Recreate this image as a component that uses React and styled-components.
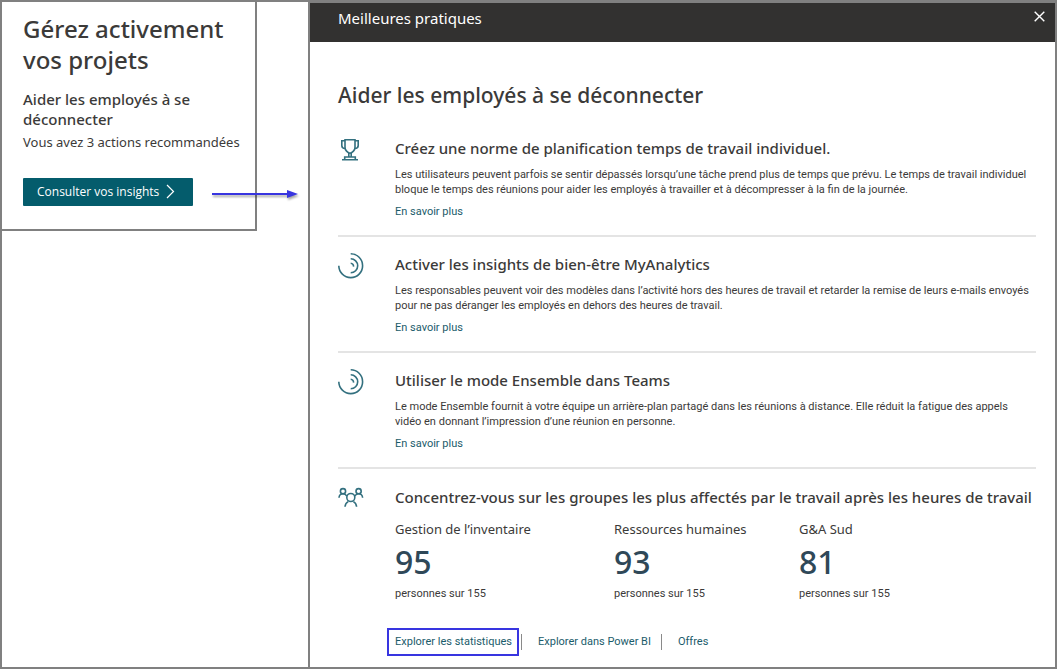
import styled, { createGlobalStyle } from "styled-components";

const practices = [
  {
    icon: "trophy",
    title: "Créez une norme de planification temps de travail individuel.",
    lines: [
      "Les utilisateurs peuvent parfois se sentir dépassés lorsqu’une tâche prend plus de temps que prévu. Le temps de travail individuel",
      "bloque le temps des réunions pour aider les employés à travailler et à décompresser à la fin de la journée.",
    ],
  },
  {
    icon: "rings",
    title: "Activer les insights de bien-être MyAnalytics",
    lines: [
      "Les responsables peuvent voir des modèles dans l’activité hors des heures de travail et retarder la remise de leurs e-mails envoyés",
      "pour ne pas déranger les employés en dehors des heures de travail.",
    ],
  },
  {
    icon: "rings",
    title: "Utiliser le mode Ensemble dans Teams",
    lines: [
      "Le mode Ensemble fournit à votre équipe un arrière-plan partagé dans les réunions à distance. Elle réduit la fatigue des appels",
      "vidéo en donnant l’impression d’une réunion en personne.",
    ],
  },
];

const groups = [
  { name: "Gestion de l’inventaire", count: 95 },
  { name: "Ressources humaines", count: 93 },
  { name: "G&A Sud", count: 81 },
];

const Icon = ({ name }) => (
  <IconSvg viewBox="0 0 26 26" aria-hidden="true">
    {name === "trophy" && (
      <>
        <path d="M7 2.700h10v7.500c0 3-2.500 5.500-5 6-2.500-.5-5-3-5-6z" />
        <path d="M7 3.700H3.800v4.800c0 2 1.200 3 3.400 3M17 3.700h3.200v4.800c0 2-1.200 3-3.400 3" />
        <path d="M10.800 16v4M13.200 16v4M6.700 22.800v-2.800h10.600v2.800M4 22.800h16" />
      </>
    )}
    {name === "rings" && (
      <>
        <path d="M12.700 .8a11.900 11.900 0 1 1-11.900 12" />
        <path d="M12.700 5.800a7 7 0 0 1 0 14" />
        <path d="M12.700 10.300a3 3 0 0 1 2.800 3.300" />
      </>
    )}
    {name === "people" && (
      <>
        <circle cx="5" cy="5.200" r="2.600" />
        <circle cx="20.600" cy="5.200" r="2.600" />
        <circle cx="12.800" cy="11.500" r="4" />
        <path d="M1 11.800c.2-2.600 1.500-4 4-4 1.800 0 3 .8 3.800 2.300M24.600 11.800c-.2-2.600-1.500-4-4-4-1.800 0-3 .8-3.800 2.300" />
        <path d="M7 20.800c.2-2.400 1.200-4.100 3.200-5.200M18.600 20.800c-.2-2.400-1.200-4.100-3.200-5.200" />
      </>
    )}
  </IconSvg>
);

const App = () => {
  return (
    <>
      <GlobalStyle />
      <Page>
        <Side>
          <Card>
            <CardTitle>Gérez activement vos projets</CardTitle>
            <CardSubtitle>Aider les employés à se déconnecter</CardSubtitle>
            <CardText>Vous avez 3 actions recommandées</CardText>
            <InsightsButton type="button">
              Consulter vos insights
              <svg width="9" height="15" viewBox="0 0 9 15" aria-hidden="true">
                <path d="M1 1l6.500 6.500L1 14" />
              </svg>
            </InsightsButton>
          </Card>
          <Arrow viewBox="0 0 88 14" aria-hidden="true">
            <path d="M0 6h76" />
            <polygon points="75,2 86,6 75,10" />
          </Arrow>
        </Side>
        <Panel>
          <PanelHeader>
            <span>Meilleures pratiques</span>
            <CloseButton type="button" aria-label="Fermer">
              <svg width="11" height="11" viewBox="0 0 11 11">
                <path d="M.7.7l9.600 9.600M10.300.7L.7 10.300" />
              </svg>
            </CloseButton>
          </PanelHeader>
          <PanelBody>
            <Heading>Aider les employés à se déconnecter</Heading>
            {practices.map((practice) => (
              <Practice key={practice.title}>
                <Icon name={practice.icon} />
                <div>
                  <PracticeTitle>{practice.title}</PracticeTitle>
                  <Description>
                    {practice.lines[0]}
                    <br />
                    {practice.lines[1]}
                  </Description>
                  <Link href="#">En savoir plus</Link>
                </div>
              </Practice>
            ))}
            <Practice $last>
              <Icon name="people" />
              <div>
                <PracticeTitle>
                  Concentrez-vous sur les groupes les plus affectés par le
                  travail après les heures de travail
                </PracticeTitle>
                <Groups>
                  {groups.map((group) => (
                    <div key={group.name}>
                      <GroupName>{group.name}</GroupName>
                      <Count>{group.count}</Count>
                      <Total>personnes sur 155</Total>
                    </div>
                  ))}
                </Groups>
                <Links>
                  <Highlight>
                    <Link href="#">Explorer les statistiques</Link>
                  </Highlight>
                  <Divided>
                    <Link href="#">Explorer dans Power BI</Link>
                  </Divided>
                  <Divided>
                    <Link href="#">Offres</Link>
                  </Divided>
                </Links>
              </div>
            </Practice>
          </PanelBody>
        </Panel>
      </Page>
    </>
  );
};

const smallFont = `Roboto, "Noto Sans", sans-serif`;

const GlobalStyle = createGlobalStyle`
  * {
    box-sizing: border-box;
  }

  body {
    margin: 0;
    background: #fff;
    color: #3b3a39;
    font-family: "Noto Sans", "Open Sans", sans-serif;
  }

  h1, h2, h3, p {
    margin: 0;
  }
`;

const Page = styled.div`
  display: grid;
  grid-template-columns: 306px 1fr;
  min-height: 100vh;
  border: 2px solid #808080;
`;

const Side = styled.aside`
  position: relative;
`;

const Card = styled.section`
  width: 255px;
  padding: 11px 0 23px 21px;
  border-right: 2px solid #808080;
  border-bottom: 2px solid #808080;
`;

const CardTitle = styled.h1`
  font-size: 24px;
  font-weight: 500;
  line-height: 31px;
`;

const CardSubtitle = styled.h2`
  margin-top: 14px;
  padding-right: 40px;
  font-size: 15px;
  font-weight: 500;
  line-height: 20px;
`;

const CardText = styled.p`
  margin-top: 3px;
  font-size: 13px;
  line-height: 20px;
  white-space: nowrap;
`;

const InsightsButton = styled.button`
  display: flex;
  align-items: center;
  gap: 7px;
  width: 170px;
  height: 28px;
  margin-top: 26px;
  padding: 0 14px 2px;
  border: 0;
  border-radius: 1px;
  background: #045c6c;
  color: #fff;
  font-family: "Open Sans", sans-serif;
  font-size: 12px;
  white-space: nowrap;
  cursor: pointer;

  svg {
    flex: none;
    fill: none;
    stroke: #fff;
    stroke-width: 1.2;
  }
`;

/* runs from the card over to the panel */
const Arrow = styled.svg`
  position: absolute;
  top: 186px;
  left: 210px;
  width: 88px;
  height: 14px;
  overflow: visible;
  filter: drop-shadow(1px 2px 1px rgba(0, 0, 0, 0.35));

  path {
    stroke: #3835e0;
    stroke-width: 2;
  }

  polygon {
    fill: #3835e0;
  }
`;

const Panel = styled.main`
  border-top: 1px solid #808080;
  border-left: 2px solid #808080;
`;

const PanelHeader = styled.header`
  display: flex;
  justify-content: space-between;
  height: 39px;
  padding: 4px 10px 0 28px;
  background: #323130;
  color: #fff;
  font-size: 15px;
  line-height: 22px;
`;

const CloseButton = styled.button`
  display: flex;
  width: 11px;
  height: 16px;
  padding: 4px 0 0;
  border: 0;
  background: none;
  cursor: pointer;

  svg {
    flex: none;
    fill: none;
    stroke: #fff;
    stroke-width: 1.4;
  }
`;

const PanelBody = styled.div`
  padding: 37px 19px 10px 28px;
`;

const Heading = styled.h2`
  margin-bottom: 10px;
  font-size: 21px;
  font-weight: 500;
  line-height: 32px;
`;

const Practice = styled.section`
  display: grid;
  grid-template-columns: 57px 1fr;
  padding: ${(props) => (props.$last ? "17px 0 0" : "16px 0 15px")};
  border-bottom: ${(props) => (props.$last ? "0" : "2px solid #e4e4e4")};
`;

const IconSvg = styled.svg`
  width: 26px;
  height: 26px;
  fill: none;
  stroke: #33707f;
  stroke-width: 1.6;
`;

const PracticeTitle = styled.h3`
  font-size: 15px;
  font-weight: 500;
  line-height: 22px;
  white-space: nowrap;
`;

const Description = styled.p`
  margin: 8px 0 7px;
  font-family: ${smallFont};
  font-size: 11px;
  line-height: 15px;
  white-space: nowrap;
`;

const Link = styled.a`
  display: block;
  color: #1b5c6b;
  font-family: ${smallFont};
  font-size: 11px;
  line-height: 16px;
  text-decoration: none;
  white-space: nowrap;
`;

const Groups = styled.div`
  display: grid;
  grid-template-columns: 219px 185px 1fr;
  margin-top: 11px;
`;

const GroupName = styled.p`
  font-size: 13px;
  line-height: 20px;
`;

const Count = styled.p`
  color: #2f4858;
  font-size: 32px;
  font-weight: 500;
  line-height: 46px;
`;

const Total = styled.p`
  font-family: ${smallFont};
  font-size: 11px;
  line-height: 18px;
`;

const Links = styled.nav`
  display: flex;
  align-items: center;
  margin: 25px 0 0 -8px;
`;

const Highlight = styled.div`
  width: 132px;
  padding: 4px 0 4px 6px;
  border: 2px solid #3835e0;
`;

const Divided = styled.div`
  margin-left: 2px;
  padding: 0 8px 0 16px;
  border-left: 1px solid #8a8a8a;
`;

export default App;
